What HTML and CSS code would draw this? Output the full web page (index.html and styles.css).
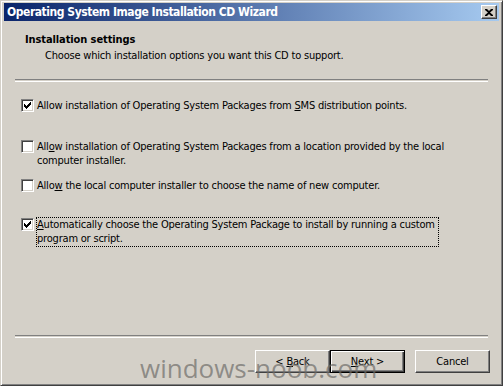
FILE: index.html
```html
<!DOCTYPE html>
<html>
<head>
<meta charset="utf-8">
<link rel="stylesheet" href="styles.css">
</head>
<body>
<div class="window">
  <div class="titlebar">
    <span class="title">Operating System Image Installation CD Wizard</span>
    <span class="close"><svg width="8" height="7" viewBox="0 0 8 7"><path d="M0 0h2l2 2 2-2h2v1L5 3.5 8 6v1H6L4 5 2 7H0V6l3-2.5L0 1z" fill="#000"/></svg></span>
  </div>
  <div class="header">
    <div class="h-title">Installation settings</div>
    <div class="h-sub">Choose which installation options you want this CD to support.</div>
  </div>
  <div class="sep"></div>
  <div class="options">
    <div class="opt o1"><span class="cb checked"></span><span class="lbl">Allow installation of Operating System Packages from <u>S</u>MS distribution points.</span></div>
    <div class="opt o2"><span class="cb"></span><span class="lbl">All<u>o</u>w installation of Operating System Packages from a location provided by the local computer installer.</span></div>
    <div class="opt o3"><span class="cb"></span><span class="lbl">Allo<u>w</u> the local computer installer to choose the name of new computer.</span></div>
    <div class="opt o4"><span class="cb checked"></span><span class="lbl focus"><u>A</u>utomatically choose the Operating System Package to install by running a custom program or script.</span></div>
  </div>
  <div class="spacer"></div>
  <div class="sep"></div>
  <div class="buttons">
    <span class="btn"><span>&lt; <u>B</u>ack</span></span>
    <span class="btn default"><span><u>N</u>ext &gt;</span></span>
    <span class="btn cancel"><span>Cancel</span></span>
  </div>
</div>
<div class="watermark">windows-noob.com</div>
</body>
</html>
```
FILE: styles.css
```css
html, body {
  margin: 0;
  padding: 0;
  width: 503px;
  height: 386px;
  overflow: hidden;
  background: #d4d0c8;
  font-family: "DejaVu Sans Condensed", "DejaVu Sans", sans-serif;
  font-size: 11px;
  letter-spacing: -0.2px;
  color: #000;
}
.window {
  position: relative;
  box-sizing: border-box;
  width: 503px;
  height: 386px;
  display: flex;
  flex-direction: column;
  background: #d4d0c8;
  border-top: 1px solid #d4d0c8;
  border-left: 1px solid #d4d0c8;
  border-right: 1px solid #404040;
  border-bottom: 1px solid #404040;
  box-shadow: inset 1px 1px 0 #fff, inset -1px -1px 0 #808080;
  padding: 2px 3px 3px 3px;
}
.titlebar {
  height: 18px;
  flex: none;
  background: linear-gradient(to right, #0a246a, #a6caf0);
  display: flex;
  align-items: center;
  justify-content: space-between;
  padding: 0 2px 0 3px;
}
.title {
  color: #fff;
  font-family: "DejaVu Sans Condensed", "DejaVu Sans", sans-serif;
  font-weight: bold;
  font-size: 12px;
  letter-spacing: -0.45px;
}
.close {
  box-sizing: border-box;
  width: 16px;
  height: 14px;
  background: #d4d0c8;
  border-top: 1px solid #fff;
  border-left: 1px solid #fff;
  border-right: 1px solid #404040;
  border-bottom: 1px solid #404040;
  box-shadow: inset -1px -1px 0 #808080;
  display: flex;
  align-items: center;
  justify-content: center;
}
.header {
  padding: 12px 0 0 21px;
  height: 46px;
  flex: none;
}
.h-title {
  font-weight: bold;
  line-height: 14px;
  letter-spacing: -0.1px;
}
.h-sub {
  padding-left: 20px;
  line-height: 14px;
  margin-top: 2px;
}
.sep {
  flex: none;
  margin: 0 11px;
  height: 1px;
  border-top: 1px solid #808080;
  border-bottom: 1px solid #fff;
}
.options {
  padding-left: 17px;
  flex: none;
}
.opt {
  display: flex;
  align-items: flex-start;
  line-height: 14px;
}
.o1 { margin-top: 17px; }
.o2 { margin-top: 27px; }
.o3 { margin-top: 11px; }
.o4 { margin-top: 25px; }
.cb {
  flex: none;
  box-sizing: border-box;
  width: 13px;
  height: 13px;
  margin: 0 3px 0 0;
  background: #fff;
  border-top: 1px solid #808080;
  border-left: 1px solid #808080;
  border-right: 1px solid #fff;
  border-bottom: 1px solid #fff;
  box-shadow: inset 1px 1px 0 #404040, inset -1px -1px 0 #d4d0c8;
  position: relative;
}
.cb.checked::after {
  content: "";
  position: absolute;
  left: 2px;
  top: 2px;
  width: 7px;
  height: 7px;
  background: no-repeat center/7px 7px url("data:image/svg+xml,%3Csvg xmlns='http://www.w3.org/2000/svg' width='7' height='7'%3E%3Cpath d='M0 2h1v1h1v1h1V3h1V2h1V1h1V0h1v3H6v1H5v1H4v1H3v1H2V6H1V5H0z' fill='%23000'/%3E%3C/svg%3E");
}
.lbl {
  flex: none;
}
.o1 .lbl, .o3 .lbl { max-width: 440px; }
.o2 .lbl { width: 415px; }
.o4 .lbl { width: 401px; }
.focus {
  outline: 1px dotted #000;
  outline-offset: 0;
}
.spacer { flex: 1; }
.buttons {
  flex: none;
  display: flex;
  justify-content: flex-end;
  padding: 12px 9px 9px 0;
}
.btn {
  box-sizing: border-box;
  width: 75px;
  height: 23px;
  display: flex;
  align-items: center;
  justify-content: center;
  background: #d4d0c8;
  border-top: 1px solid #fff;
  border-left: 1px solid #fff;
  border-right: 1px solid #404040;
  border-bottom: 1px solid #404040;
  box-shadow: inset -1px -1px 0 #808080;
}
.btn.default {
  border: 1px solid #000;
  box-shadow: inset 1px 1px 0 #fff, inset -1px -1px 0 #404040, inset -2px -2px 0 #808080;
}
.btn.cancel { margin-left: 10px; }
.watermark {
  position: absolute;
  left: 140px;
  top: 350px;
  font-family: "Open Sans", "DejaVu Sans", sans-serif;
  font-size: 26px;
  letter-spacing: 0;
  color: rgba(110, 108, 104, 0.7);
  line-height: 36px;
  pointer-events: none;
}
```
